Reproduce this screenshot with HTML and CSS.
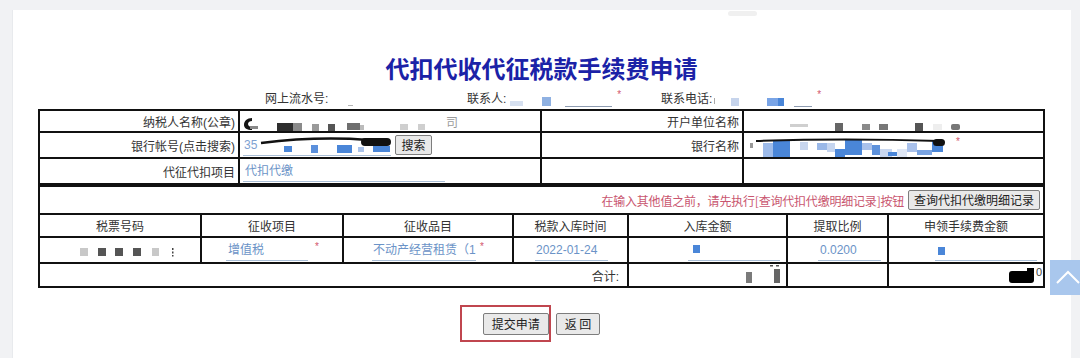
FILE: index.html
```html
<!DOCTYPE html>
<html lang="zh-CN">
<head>
<meta charset="utf-8">
<title>代扣代收代征税款手续费申请</title>
<link rel="stylesheet" href="styles.css">
</head>
<body>
<div class="smudge"></div>
<div class="panel">
  <div class="sheet">
    <h1 class="title">代扣代收代征税款手续费申请</h1>
    <div class="info">
      <div class="grp grp-a"><span>网上流水号:</span><svg class="mask" width="40" height="24" viewBox="0 0 40 24"><rect x="20" y="20" width="5" height="1" fill="#b5b5b5"/></svg></div>
      <div class="grp grp-b"><span>联系人:</span><svg class="mask" width="108" height="24" viewBox="0 0 108 24"><rect x="4" y="16" width="13" height="5" fill="#d6e0f0"/><rect x="36" y="12" width="9" height="9" fill="#8fb1e2"/><rect x="59" y="21" width="47" height="1" fill="#8d9bb0"/></svg><span class="req">*</span></div>
      <div class="grp grp-c"><span>联系电话:</span><svg class="mask" width="102" height="24" viewBox="0 0 102 24"><rect x="2" y="13" width="1" height="6" fill="#aaa"/><rect x="19" y="13" width="8" height="8" fill="#c6d4ec"/><rect x="55" y="13" width="11" height="8" fill="#79a4e6"/><rect x="66" y="13" width="6" height="8" fill="#4a86d8"/><rect x="82" y="21" width="18" height="1" fill="#8d9bb0"/></svg><span class="req">*</span></div>
    </div>

    <table class="grid t1">
      <colgroup><col class="w200"><col class="w302"><col class="w202"><col class="w301"></colgroup>
      <tr class="r1">
        <td class="lab">纳税人名称(公章)</td>
        <td class="val"><svg class="mask" width="200" height="20" viewBox="0 0 200 20"><path d="M9 7 C4 7 1 10 1 14 C1 17 4 19 9 19 L9 16 C7 16 5 15 5 13 C5 11 7 10 9 10 Z" fill="#151515"/><rect x="7" y="15" width="8" height="3" fill="#888"/><rect x="34" y="12" width="16" height="8" fill="#2e2e2e"/><rect x="50" y="12" width="9" height="8" fill="#8a8a8a"/><rect x="69" y="13" width="7" height="7" fill="#9a9a9a"/><rect x="85" y="13" width="7" height="7" fill="#555"/><rect x="104" y="12" width="13" height="7" fill="#6e6e6e"/><rect x="117" y="14" width="4" height="5" fill="#bbb"/><rect x="157" y="13" width="8" height="6" fill="#cfcfcf"/><rect x="175" y="13" width="7" height="6" fill="#cfcfcf"/></svg><span class="faint">司</span></td>
        <td class="lab">开户单位名称</td>
        <td class="val0"><svg class="mask" width="220" height="20" viewBox="0 0 220 20"><rect x="46" y="13" width="18" height="3" fill="#cfcfcf"/><rect x="91" y="12" width="8" height="8" fill="#666"/><rect x="118" y="13" width="8" height="6" fill="#8a8a8a"/><rect x="135" y="13" width="9" height="6" fill="#777"/><rect x="171" y="12" width="8" height="8" fill="#555"/><rect x="189" y="13" width="9" height="6" fill="#eee"/><rect x="207" y="13" width="9" height="6" rx="2" fill="#777"/></svg></td>
      </tr>
      <tr class="r2">
        <td class="lab">银行帐号(点击搜索)</td>
        <td class="val"><span class="inp inp-acct"><span class="num">35</span><svg class="mask inl" width="134" height="20" viewBox="0 0 134 20"><rect x="27" y="11" width="8" height="6" fill="#4a86d8"/><rect x="54" y="10" width="7" height="8" fill="#5b90dc"/><rect x="80" y="10" width="15" height="8" fill="#4a86d8"/><rect x="101" y="12" width="6" height="5" fill="#aac3ea"/><rect x="116" y="11" width="17" height="6" fill="#4a86d8"/><path d="M4 8 Q60 1 112 5" stroke="#111" stroke-width="2.5" fill="none"/><rect x="104" y="3" width="30" height="8" rx="4" fill="#111"/></svg></span><button class="btn btn-search">搜索</button></td>
        <td class="lab">银行名称</td>
        <td class="val0"><svg class="mask" width="205" height="24" viewBox="0 0 205 24"><rect x="6" y="10" width="3" height="5" fill="#999"/><rect x="19" y="10" width="15" height="15" fill="#9dbbea"/><rect x="29" y="8" width="17" height="16" fill="#4a86d8"/><rect x="56" y="9" width="8" height="8" fill="#c8d6ee"/><rect x="73" y="10" width="10" height="7" fill="#9ab8e8"/><rect x="83" y="10" width="8" height="9" fill="#c5d5f0"/><rect x="91" y="16" width="10" height="8" fill="#4a86d8"/><rect x="101" y="6" width="17" height="16" fill="#4a86d8"/><rect x="118" y="10" width="10" height="7" fill="#a9c1eb"/><rect x="128" y="12" width="8" height="10" fill="#5e92dc"/><rect x="136" y="16" width="12" height="8" fill="#c9d7ef"/><rect x="144" y="19" width="9" height="4" fill="#4a86d8"/><rect x="153" y="16" width="10" height="8" fill="#dfe7f5"/><rect x="163" y="10" width="10" height="9" fill="#a9c1eb"/><rect x="173" y="17" width="15" height="5" fill="#7aa4e2"/><rect x="188" y="8" width="11" height="11" fill="#4a86d8"/><path d="M12 8 Q100 5 196 8" stroke="#111" stroke-width="2" fill="none"/><rect x="189" y="6" width="12" height="7" rx="3.5" fill="#111"/></svg><span class="req req-in">*</span></td>
      </tr>
      <tr class="r3">
        <td class="lab">代征代扣项目</td>
        <td class="val"><span class="inp inp-item">代扣代缴</span></td>
        <td class="blank"></td>
        <td class="blank"></td>
      </tr>
    </table>

    <table class="grid t2">
      <colgroup><col class="w162"><col class="w142"><col class="w170"><col class="w115"><col class="w159"><col class="w101"><col class="w156"></colgroup>
      <tr class="r4">
        <td class="notice" colspan="7"><span class="warn">在输入其他值之前，请先执行[查询代扣代缴明细记录]按钮</span><button class="btn btn-query">查询代扣代缴明细记录</button></td>
      </tr>
      <tr class="r5">
        <td class="hd">税票号码</td>
        <td class="hd">征收项目</td>
        <td class="hd">征收品目</td>
        <td class="hd">税款入库时间</td>
        <td class="hd">入库金额</td>
        <td class="hd">提取比例</td>
        <td class="hd">申领手续费金额</td>
      </tr>
      <tr class="r6">
        <td class="d-ticket"><svg class="mask" width="96" height="24" viewBox="0 0 96 24"><rect x="0" y="10" width="8" height="8" fill="#c8c8c8"/><rect x="18" y="10" width="8" height="8" fill="#555"/><rect x="35" y="10" width="8" height="8" fill="#555"/><rect x="53" y="10" width="8" height="8" fill="#555"/><rect x="72" y="10" width="7" height="8" fill="#c8c8c8"/><rect x="92" y="10" width="1.5" height="2" fill="#444"/><rect x="92" y="13.5" width="1.5" height="2" fill="#444"/><rect x="92" y="17" width="1.5" height="1.5" fill="#444"/></svg></td>
        <td class="d-kind"><span class="inp inp-kind">增值税</span><span class="req req-in">*</span></td>
        <td class="d-item"><span class="inp inp-pm">不动产经营租赁（1</span><span class="req req-in2">*</span></td>
        <td class="d-date"><span class="inp inp-date">2022-01-24</span></td>
        <td class="d-right"><span class="inp inp-amt"><span class="blk"></span></span></td>
        <td class="d-right"><span class="inp inp-rate">0.0200</span></td>
        <td class="d-right"><span class="inp inp-fee"><span class="blk blk-fee"></span></span></td>
      </tr>
      <tr class="r7">
        <td class="sum" colspan="4">合计:</td>
        <td class="d-right"><svg class="mask" width="36" height="22" viewBox="0 0 36 22"><rect x="2" y="8" width="6" height="11" fill="#7a7a7a"/><rect x="30" y="5" width="6" height="14" fill="#666"/><rect x="26" y="1" width="3" height="1.5" fill="#555"/><rect x="32" y="1" width="3" height="1.5" fill="#555"/></svg></td>
        <td></td>
        <td class="d-right tot"><svg class="mask" width="26" height="22" viewBox="0 0 26 22"><rect x="0" y="7" width="25" height="12" rx="3" fill="#000"/><rect x="18" y="4" width="7" height="5" fill="#000"/></svg><span class="zero">0</span></td>
      </tr>
    </table>

    <div class="actions">
      <span class="mark-wrap"><span class="mark"></span><button class="btn btn-act">提交申请</button></span>
      <button class="btn btn-act">返 回</button>
    </div>
  </div>
</div>
<div class="totop"><svg width="30" height="35" viewBox="0 0 30 35"><path d="M7 23 L18 12 L29 23" stroke="#fff" stroke-width="2" fill="none"/></svg></div>
</body>
</html>
```

FILE: styles.css
```css
* { box-sizing: border-box; }
html, body { margin: 0; height: 100%; }
body {
  background: #f1f2f4;
  font-family: "Liberation Sans", "Noto Sans CJK SC", sans-serif;
  font-size: 12px;
  color: #333;
  overflow: hidden;
}
.smudge {
  position: absolute;
  left: 728px;
  top: 11px;
  width: 29px;
  height: 5px;
  background: #f0f0f0;
  border-radius: 3px;
}
.panel {
  margin: 10px 9px 0 12px;
  height: 348px;
  background: #fff;
  border-left: 1px solid #e8eaed;
  padding-left: 25px;
}
.sheet { width: 1007px; }
.title {
  margin: 0;
  padding-top: 42px;
  height: 75px;
  line-height: 32px;
  font-family: "Noto Sans CJK SC", sans-serif;
  font-size: 24px;
  font-weight: 700;
  color: #1b22a7;
  text-align: center;
}
.info {
  display: flex;
  height: 24px;
  align-items: center;
  padding-left: 227px;
  color: #333;
}
.grp { display: flex; align-items: center; height: 24px; }
.grp-a { width: 202px; }
.grp-b { width: 194px; }
.mask { display: block; flex: none; }
.mask.inl { display: inline-block; vertical-align: top; }
.req {
  color: #d2566b;
  font-size: 10px;
  line-height: 1;
  align-self: flex-start;
  margin-top: 5px;
  margin-left: 3px;
}

.grid {
  width: 1007px;
  table-layout: fixed;
  border-collapse: separate;
  border-spacing: 0;
  border-top: 2px solid #111;
  border-left: 2px solid #111;
}
.grid td {
  border-right: 2px solid #111;
  border-bottom: 2px solid #111;
  padding: 0;
  white-space: nowrap;
  overflow: hidden;
  vertical-align: middle;
}
.w200 { width: 200px; } .w302 { width: 302px; } .w202 { width: 202px; } .w301 { width: 301px; }
.w162 { width: 162px; } .w142 { width: 142px; } .w170 { width: 170px; } .w115 { width: 115px; }
.w159 { width: 159px; } .w101 { width: 101px; } .w156 { width: 156px; }

.r1 td { height: 22px; }
.r2 td { height: 26px; }
.r3 td { height: 26px; }
.r4 td { height: 28px; }
.r5 td { height: 23px; }
.r6 td { height: 26px; }
.r7 td { height: 24px; }

.lab { text-align: right; padding-right: 3px !important; }
.val { padding-left: 3px !important; }
.val0 { padding-left: 0; }
.val > *, .val0 > * { vertical-align: middle; }
.val0 .mask, .val .mask { display: inline-block; }
.faint { color: #9a9a9a; margin-left: 3px; vertical-align: middle; }

.inp {
  display: inline-block;
  vertical-align: middle;
  height: 21px;
  line-height: 20px;
  border-bottom: 1px solid #a9bed6;
  color: #6b93c7;
  overflow: hidden;
  white-space: nowrap;
}
.num { color: #7fa2d2; padding-left: 1px; vertical-align: top; }
.inp-acct { width: 148px; }
.inp-item { width: 202px; padding-left: 2px; }
.req-in { display: inline-block; vertical-align: middle; margin: -6px 0 0 7px; }
.req-in2 { display: inline-block; vertical-align: middle; margin: -6px 0 0 4px; }

.btn {
  font-family: "Noto Sans CJK SC", sans-serif;
  font-size: 12px;
  color: #222;
  background: #e9e9e9;
  border: 1px solid #7d7d7d;
  border-radius: 2px;
  padding: 0 7px;
  height: 20px;
  line-height: 18px;
  vertical-align: middle;
  margin: 0;
}
.btn-search { margin-left: 4px; width: 37px; padding: 0; }

.notice { text-align: right; padding-right: 3px !important; }
.warn {
  color: #c9566f;
  font-family: "Noto Sans CJK SC", sans-serif;
  font-size: 12px;
  vertical-align: middle;
  margin-right: 4px;
  letter-spacing: -0.2px;
}
.btn-query { width: 132px; padding: 0; }

.hd { text-align: center; }
.d-ticket { padding-left: 40px !important; }
.d-ticket .mask { display: inline-block; vertical-align: middle; }
.d-kind { padding-left: 24px !important; }
.d-item { padding-left: 28px !important; }
.d-date { padding-left: 21px !important; }
.d-right { text-align: right; padding-right: 6px !important; }
.inp-kind { width: 82px; padding-left: 2px; }
.inp-pm { width: 104px; padding-left: 1px; }
.inp-date { width: 73px; padding-left: 1px; }
.inp-amt { width: 92px; text-align: left; }
.inp-rate { width: 63px; text-align: left; padding-left: 2px; }
.inp-fee { width: 102px; text-align: left; }
.blk {
  display: inline-block;
  width: 7px;
  height: 8px;
  background: #4a86d8;
  margin-left: 5px;
  vertical-align: middle;
  margin-top: -2px;
}
.blk-fee { margin-left: 3px; margin-top: 2px; }

.sum { text-align: right; padding-right: 8px !important; }
.d-right .mask { display: inline-block; vertical-align: middle; }
.tot { padding-right: 1px !important; }
.zero { font-size: 11px; color: #444; vertical-align: middle; margin-left: 1px; position: relative; top: -3px; }

.actions {
  display: flex;
  justify-content: center;
  gap: 7px;
  padding-top: 25px;
}
.mark-wrap { position: relative; display: flex; }
.mark {
  position: absolute;
  left: -23px;
  top: -8px;
  width: 91px;
  height: 37px;
  border: 2px solid #c0464f;
}
.btn-act { height: 22px; line-height: 20px; padding: 0 8px; }

.totop {
  position: fixed;
  top: 260px;
  right: 0;
  width: 30px;
  height: 35px;
  background: #a9c7ed;
}
.totop svg { display: block; }
```
